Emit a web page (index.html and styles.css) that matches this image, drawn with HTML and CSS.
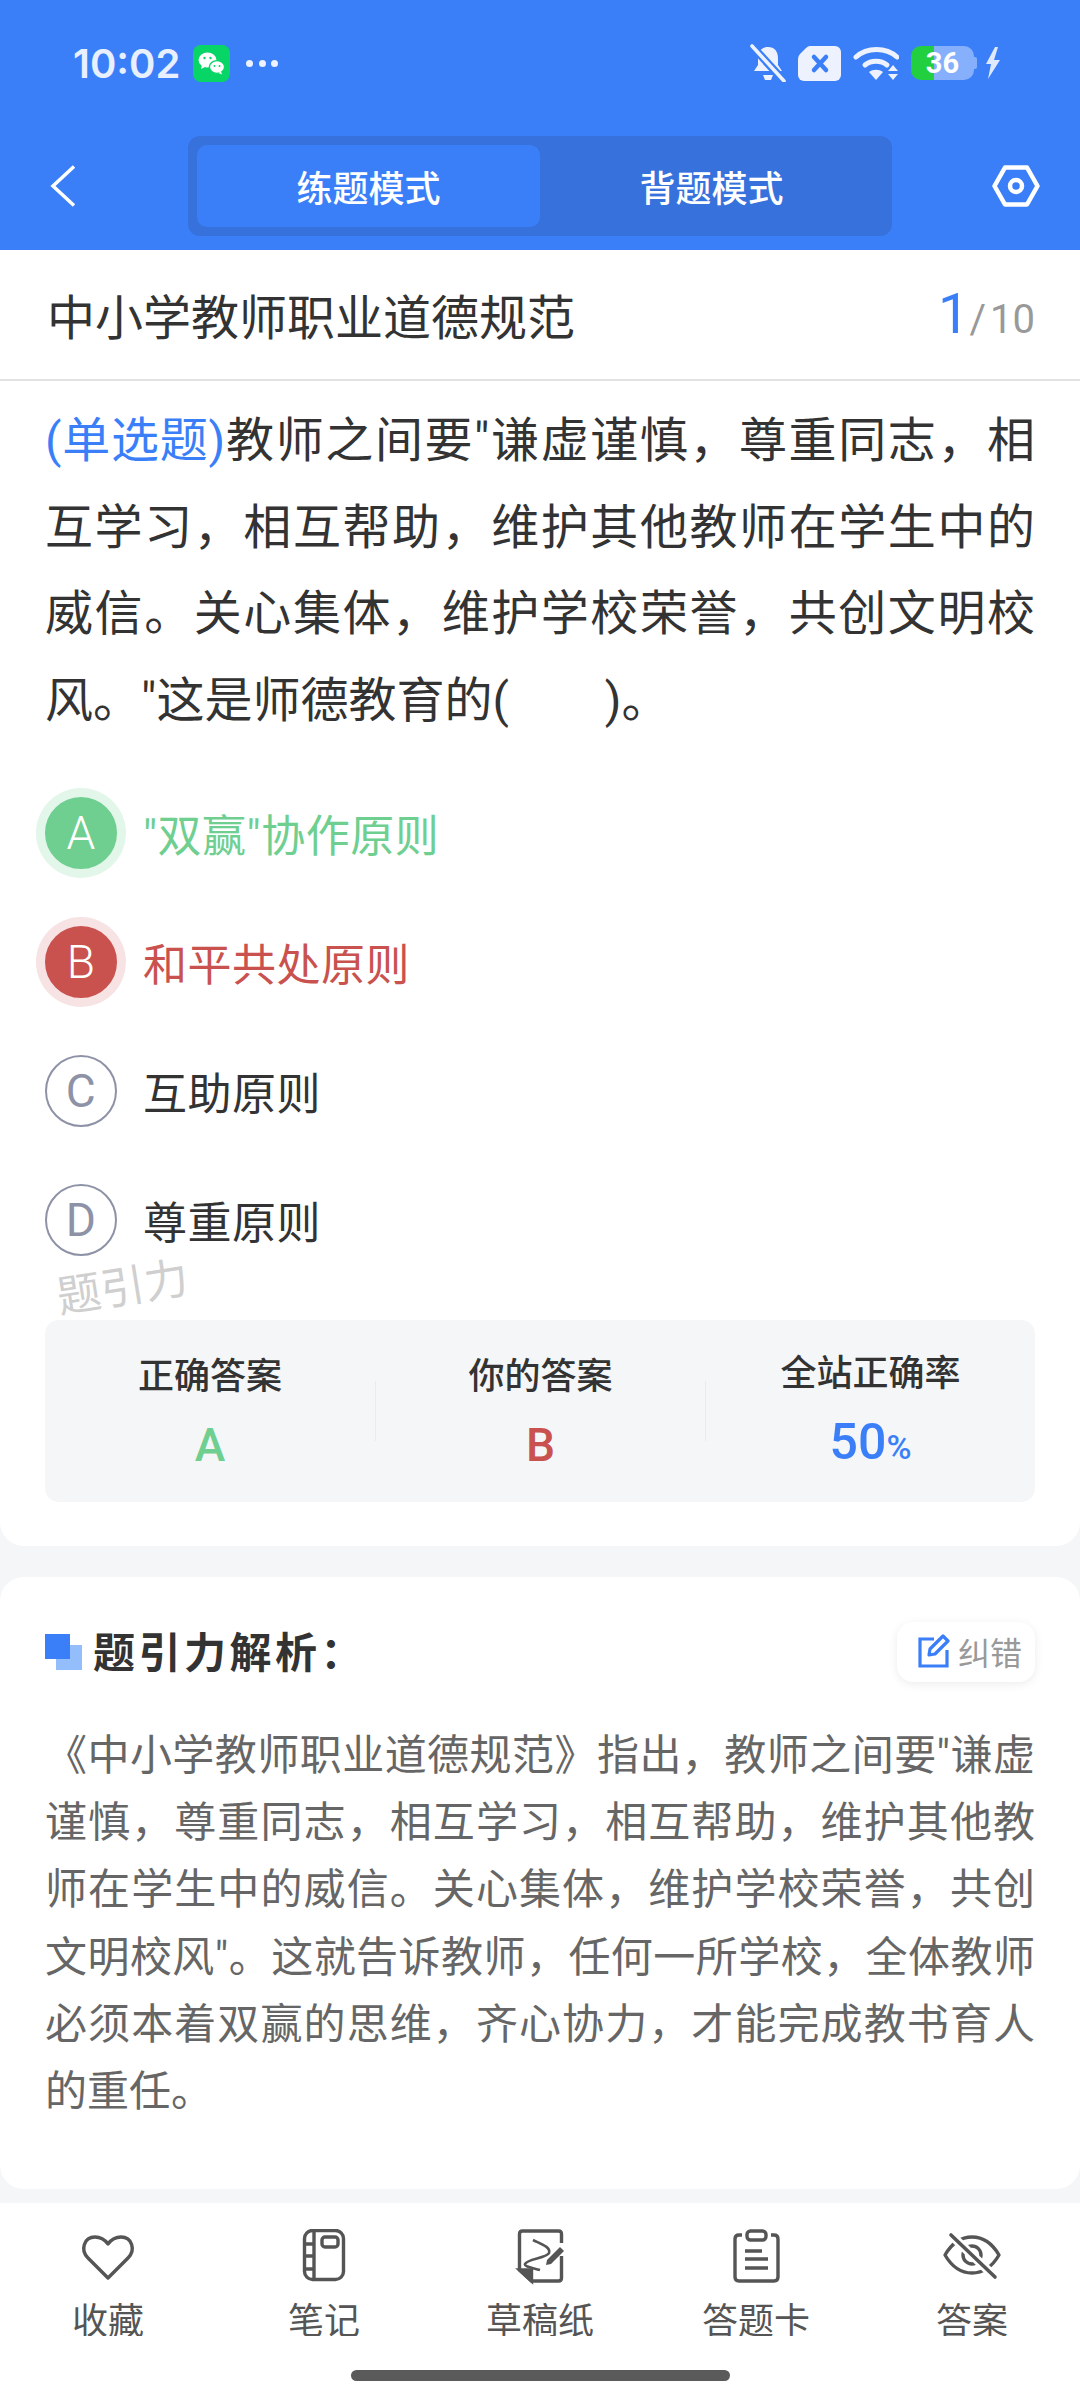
FILE: index.html
```html
<!DOCTYPE html>
<html lang="zh">
<head>
<meta charset="utf-8">
<title>题引力</title>
<link rel="stylesheet" href="styles.css">
</head>
<body>
<div class="page">

  <header class="top">
    <div class="status">
      <span class="time">10:02</span>
      <svg class="wechat" viewBox="0 0 37 37" width="37" height="37">
        <rect width="37" height="37" rx="8" fill="#07d566"/>
        <ellipse cx="14.500" cy="15" rx="9" ry="7.600" fill="#fff"/>
        <path d="M9 20l-1 4 4-2z" fill="#fff"/>
        <ellipse cx="24" cy="22" rx="7.600" ry="6.400" fill="#fff" stroke="#07d566" stroke-width="1.400"/>
        <path d="M28 26.500l1 3-3.500-1.600z" fill="#fff"/>
        <circle cx="11.500" cy="13" r="1.200" fill="#07d566"/>
        <circle cx="17.500" cy="13" r="1.200" fill="#07d566"/>
        <circle cx="21.500" cy="21" r="1" fill="#07d566"/>
        <circle cx="26.500" cy="21" r="1" fill="#07d566"/>
      </svg>
      <span class="dots"><i></i><i></i><i></i></span>
      <span class="status-right">
        <svg viewBox="0 0 36 38" width="36" height="38" fill="#edf2fe">
          <path d="M18 3c6.500 0 10 4.500 10 11v7l4 6H4l4-6v-7C8 7.500 11.500 3 18 3z"/>
          <path d="M13 31h10l-2 5h-6z"/>
          <path d="M1 1l33 36" stroke="#3b7ff8" stroke-width="8"/>
          <path d="M2 2l32 35" stroke="#edf2fe" stroke-width="3.600" stroke-linecap="round"/>
        </svg>
        <svg class="sim" viewBox="0 0 43 35" width="43" height="35">
          <path d="M12 0h25a6 6 0 0 1 6 6v23a6 6 0 0 1-6 6H6a6 6 0 0 1-6-6V13q0-3 2-5l6-6q2-2 4-2z" fill="#edf2fe"/>
          <path d="M16 11l12 13M28 11L16 24" stroke="#3b7ff8" stroke-width="4.500" stroke-linecap="round"/>
        </svg>
        <svg class="wifi" viewBox="0 0 46 34" width="46" height="34" fill="none" stroke="#edf2fe" stroke-width="5" stroke-linecap="round">
          <path d="M3 11c11-10 30-10 41 0"/>
          <path d="M12 19c6-5 16-5 22 0"/>
          <path d="M16 26l7 8 7-8c-4-3-10-3-14 0z" fill="#edf2fe" stroke="none"/>
          <path d="M40 19l5 6H35zM40 34l5-6H35z" fill="#edf2fe" stroke="none"/>
        </svg>
        <span class="battery"><span class="battery-body"><span class="battery-num">36</span></span><span class="battery-nub"></span></span>
        <svg class="bolt" viewBox="0 0 16 32" width="16" height="32" fill="#dfe9fd">
          <path d="M10 0L1 17h5l-3 15 12-19h-6l4-13z"/>
        </svg>
      </span>
    </div>
    <div class="nav">
      <svg class="back" viewBox="0 0 26 42" width="26" height="42" fill="none" stroke="#fff" stroke-width="3.500">
        <path d="M24 1.500L3 21l21 19.500"/>
      </svg>
      <div class="seg">
        <span class="seg-tab active">练题模式</span>
        <span class="seg-tab">背题模式</span>
      </div>
      <svg class="hex" viewBox="0 0 48 42" width="48" height="42" fill="none" stroke="#fff" stroke-width="4.500">
        <path d="M13 2.500h22L45.500 21 35 39.500H13L2.500 21z" stroke-linejoin="round"/>
        <circle cx="24" cy="21" r="6"/>
      </svg>
    </div>
  </header>

  <section class="card first">
    <div class="title-row">
      <span class="title">中小学教师职业道德规范</span>
      <span class="count"><b>1</b><em>/</em>10</span>
    </div>
    <div class="question-wrap">
      <p class="question"><span class="q-type">(单选题)</span>教师之间要"谦虚谨慎，尊重同志，相互学习，相互帮助，维护其他教师在学生中的威信。关心集体，维护学校荣誉，共创文明校风。"这是师德教育的(　　)。</p>

      <ul class="options">
        <li class="opt right"><span class="mark">A</span><span>"双赢"协作原则</span></li>
        <li class="opt wrong"><span class="mark">B</span><span>和平共处原则</span></li>
        <li class="opt"><span class="mark">C</span><span>互助原则</span></li>
        <li class="opt"><span class="mark">D</span><span>尊重原则</span></li>
      </ul>

      <div class="watermark">题引力</div>

      <div class="stats">
        <div class="stat"><span class="stat-label">正确答案</span><span class="stat-val green">A</span></div>
        <div class="stat"><span class="stat-label">你的答案</span><span class="stat-val red">B</span></div>
        <div class="stat"><span class="stat-label">全站正确率</span><span class="stat-val blue">50<small>%</small></span></div>
      </div>
    </div>
  </section>

  <section class="card second">
    <div class="an-head">
      <span class="an-icon"></span>
      <h3 class="an-title">题引力解析：</h3>
      <span class="fix">
        <svg viewBox="0 0 32 34" width="32" height="34" fill="none" stroke="#3b7ff8" stroke-width="3.200">
          <path d="M16 5H2v27h27V16"/>
          <path d="M11 21l1-6L25 2l5 5-13 13z" stroke-linejoin="round"/>
        </svg>
        纠错
      </span>
    </div>
    <p class="an-body">《中小学教师职业道德规范》指出，教师之间要"谦虚谨慎，尊重同志，相互学习，相互帮助，维护其他教师在学生中的威信。关心集体，维护学校荣誉，共创文明校风"。这就告诉教师，任何一所学校，全体教师必须本着双赢的思维，齐心协力，才能完成教书育人的重任。</p>
  </section>

  <nav class="tabs">
    <div class="tab">
      <svg viewBox="0 0 60 56" width="60" height="56" fill="none" stroke="#555" stroke-width="3.400">
        <path d="M30 49L10 29C2 21 6 8 17 8c6 0 10 3 13 7 3-4 7-7 13-7 11 0 15 13 7 21z" stroke-linejoin="round"/>
      </svg>
      <span>收藏</span>
    </div>
    <div class="tab">
      <svg viewBox="0 0 60 56" width="60" height="56" fill="none" stroke="#555" stroke-width="3.400">
        <rect x="10.500" y="1.500" width="39" height="49" rx="8"/>
        <path d="M20 1.500v49M10.500 15h9.500M10.500 27h9.500M10.500 40h9.500"/>
        <rect x="28" y="8" width="16" height="10" rx="3"/>
      </svg>
      <span>笔记</span>
    </div>
    <div class="tab">
      <svg viewBox="0 0 60 56" width="60" height="56" fill="none" stroke="#555" stroke-width="3.400">
        <path d="M51.500 14V5q0-3-3-3H12.500q-3 0-3 3v36l12 11h27q3 0 3-3V27"/>
        <path d="M9.500 41h12v11z" fill="#555"/>
        <path d="M23 11c8 4 18 7 16 13-2 5-22 6-24 11-1 3 9 4 15 6" stroke-width="2.600"/>
        <path d="M36 36l1-5 13-13 4 4-13 13z" fill="#555" stroke="none"/>
      </svg>
      <span>草稿纸</span>
    </div>
    <div class="tab">
      <svg viewBox="0 0 60 56" width="60" height="56" fill="none" stroke="#555" stroke-width="3.400">
        <path d="M16 6h-3q-4 0-4 4v38q0 4 4 4h35q4 0 4-4V10q0-4-4-4h-3"/>
        <rect x="21" y="2" width="19" height="9" rx="3.500"/>
        <path d="M19 22h17M19 30h23M19 39h23"/>
      </svg>
      <span>答题卡</span>
    </div>
    <div class="tab">
      <svg viewBox="0 0 60 56" width="60" height="56" fill="none" stroke="#555" stroke-width="3.400">
        <path d="M3 26C10 14 20 8 30 8s20 6 27 18c-7 12-17 18-27 18S10 38 3 26z" stroke-linejoin="round"/>
        <circle cx="30" cy="26" r="9"/>
        <path d="M9 6l44 42" stroke="#fff" stroke-width="9"/>
        <path d="M9 6l44 42" stroke-width="3.600" stroke-linecap="round"/>
      </svg>
      <span>答案</span>
    </div>
  </nav>
  <div class="home-row"><span class="home-bar"></span></div>
</div>
</body>
</html>
```

FILE: styles.css
```css
* {
  box-sizing: border-box;
}

html,
body {
  margin: 0;
  padding: 0;
}

body {
  background: #f4f6f8;
  font-family: Roboto, "Noto Sans CJK SC", sans-serif;
  color: #333;
}

.page {
  width: 1080px;
  height: 2400px;
  overflow: hidden;
  display: flex;
  flex-direction: column;
}

/* header */
.top {
  height: 250px;
  background: #3b7ff8;
}

.status {
  height: 124px;
  padding: 2px 79px 0 73px;
  display: flex;
  align-items: center;
}

.time {
  font-family: Inter, Roboto, sans-serif;
  font-size: 40px;
  font-weight: 600;
  color: #e8effe;
  width: 120px;
}

.dots {
  display: flex;
  gap: 5.500px;
  margin-left: 16px;
}

.dots i {
  width: 7px;
  height: 7px;
  border-radius: 50%;
  background: #edf2fe;
}

.status-right {
  margin-left: auto;
  display: flex;
  align-items: center;
  gap: 12px;
}

.battery {
  display: flex;
  align-items: center;
}

.battery-body {
  width: 63px;
  height: 34px;
  border-radius: 10px;
  background: linear-gradient(90deg, #22cf3e 37%, rgba(255, 255, 255, 0.38) 37%);
  display: flex;
  align-items: center;
  justify-content: center;
}

.battery-nub {
  width: 3px;
  height: 12px;
  border-radius: 0 2px 2px 0;
  background: rgba(255, 255, 255, 0.38);
}

.battery-num {
  font-size: 29px;
  font-weight: 700;
  color: #fff;
}

.bolt {
  margin-left: -4px;
}

.nav {
  height: 124px;
  padding: 0 40px 0 50px;
  display: flex;
  align-items: center;
}

.seg {
  width: 704px;
  height: 100px;
  margin-left: 112px;
  padding: 9px;
  border-radius: 12px;
  background: #3671dc;
  display: flex;
}

.seg-tab {
  width: 344px;
  border-radius: 10px;
  font-size: 36px;
  font-weight: 500;
  color: #fff;
  display: flex;
  align-items: center;
  justify-content: center;
}

.seg-tab.active {
  background: #3b7ff8;
}

.hex {
  margin-left: auto;
}

/* question card */
.card {
  background: #fff;
}

.first {
  height: 1296px;
  border-radius: 0 0 24px 24px;
}

.title-row {
  height: 131px;
  padding: 0 45px 2px 47px;
  border-bottom: 2px solid #e2e2e2;
  display: flex;
  align-items: center;
  justify-content: space-between;
}

.title {
  font-size: 48px;
  color: #333;
}

.count {
  font-size: 40px;
  color: #999;
}

.count b {
  font-size: 56px;
  font-weight: 400;
  color: #3b7ff8;
}

.count em {
  margin: 0 4px 0 0;
  font-style: normal;
}

.question-wrap {
  padding: 17px 45px 0;
  position: relative;
}

.question {
  margin: 0;
  font-size: 48px;
  line-height: 86.500px;
  text-align: justify;
  color: #333;
}

.q-type {
  color: #3b7ff8;
  letter-spacing: -0.800px;
}

.options {
  list-style: none;
  margin: 24px 0 0;
  padding: 0;
}

.opt {
  height: 129px;
  display: flex;
  align-items: center;
  font-size: 44px;
  letter-spacing: 0.500px;
  color: #333;
}

.mark {
  width: 72px;
  height: 72px;
  margin-right: 26px;
  border: 2px solid #8e92a6;
  border-radius: 50%;
  font-size: 46px;
  font-weight: 400;
  color: #8e92a6;
  display: flex;
  align-items: center;
  justify-content: center;
}

.right {
  color: #6fcf90;
}

.right .mark {
  background: #6fcf90;
  border-color: #6fcf90;
  color: #fff;
  font-weight: 300;
  box-shadow: 0 0 0 9px #e3f6ea;
}

.wrong {
  color: #c9524f;
}

.wrong .mark {
  background: #c9524f;
  border-color: #c9524f;
  color: #fff;
  font-weight: 300;
  box-shadow: 0 0 0 9px #f7e3e3;
}

.watermark {
  position: absolute;
  left: 56px;
  top: 871px;
  font-size: 44px;
  color: #cfcfcf;
  transform: rotate(-9deg);
}

.stats {
  height: 182px;
  margin-top: 36px;
  border-radius: 14px;
  background: #f4f6f8;
  display: grid;
  grid-template-columns: repeat(3, 1fr);
  align-items: center;
}

.stat {
  height: 60px;
  display: flex;
  flex-direction: column;
  align-items: center;
  justify-content: center;
  gap: 17px;
  border-left: 1px solid #e9ebee;
}

.stat:first-child {
  border-left: 0;
}

.stat-label {
  font-size: 36px;
  font-weight: 500;
  line-height: 50px;
  color: #333;
}

.stat-val {
  font-size: 46px;
  font-weight: 500;
  line-height: 52px;
}

.stat-val.blue {
  font-size: 50px;
}

.stat-val small {
  font-size: 34px;
}

.green {
  color: #6fcf90;
}

.red {
  color: #c9524f;
}

.blue {
  color: #3b7ff8;
}

/* analysis card */
.second {
  height: 612px;
  margin-top: 31px;
  padding: 45px 45px 0;
  border-radius: 24px;
}

.an-head {
  height: 60px;
  display: flex;
  align-items: center;
}

.an-icon {
  width: 37px;
  height: 36px;
  margin-right: 11px;
  display: block;
  background: linear-gradient(#3b7ff8, #3b7ff8) 0 0 / 25px 25px no-repeat,
    linear-gradient(#94bdfb, #94bdfb) 100% 100% / 26px 25px no-repeat;
}

.an-title {
  margin: 0;
  padding-bottom: 5px;
  font-size: 42px;
  font-weight: 700;
  letter-spacing: 3.500px;
  color: #333;
}

.fix {
  margin-left: auto;
  width: 138px;
  height: 60px;
  padding: 0 0 3px 8px;
  border-radius: 16px;
  background: #fff;
  box-shadow: 0 2px 10px rgba(0, 0, 0, 0.08);
  font-size: 32px;
  color: #999;
  display: flex;
  align-items: center;
  justify-content: center;
  gap: 8px;
}

.an-body {
  margin: 40px 0 0;
  font-size: 42px;
  line-height: 67.200px;
  text-align: justify;
  color: #666;
}

/* bottom */
.tabs {
  margin-top: 14px;
  height: 133px;
  padding-top: 26px;
  background: #fff;
  display: grid;
  grid-template-columns: repeat(5, 1fr);
}

.tab {
  display: flex;
  flex-direction: column;
  align-items: center;
  gap: 7px;
  font-size: 36px;
  color: #555;
}

.home-row {
  flex: 1;
  background: #fff;
  padding-top: 34px;
  display: flex;
  justify-content: center;
}

.home-bar {
  width: 379px;
  height: 11px;
  border-radius: 6px;
  background: #5a5a5a;
}
```
